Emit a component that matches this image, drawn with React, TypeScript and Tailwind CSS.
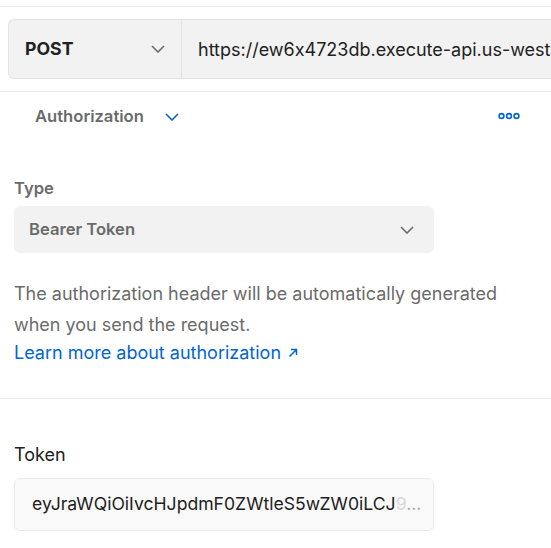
function Chevron({ className, color = "#6b6b6b" }: { className?: string; color?: string }) {
  return (
    <svg className={className} width="14" height="8" viewBox="0 0 14 8" fill="none">
      <polyline points="1,1 7,7 13,1" stroke={color} strokeWidth="1.6" />
    </svg>
  );
}

function Dots() {
  return (
    <svg width="22" height="8" viewBox="0 0 22 8" fill="none">
      <circle cx="3.5" cy="4" r="2.4" stroke="#0265d2" strokeWidth="1.6" />
      <circle cx="11" cy="4" r="2.4" stroke="#0265d2" strokeWidth="1.6" />
      <circle cx="18.5" cy="4" r="2.4" stroke="#0265d2" strokeWidth="1.6" />
    </svg>
  );
}

function ExternalArrow() {
  return (
    <svg width="10" height="10" viewBox="0 0 10 10" fill="none">
      <path d="M1.5 8.5 L8.5 1.5 M3 1.5 H8.5 V7" stroke="#0265d2" strokeWidth="1.5" />
    </svg>
  );
}

export default function App() {
  return (
    <div
      className="w-[551px] h-[548px] overflow-hidden bg-white [font-feature-settings:'calt'_0]"
      style={{ fontFamily: "Inter, 'Noto Sans', sans-serif" }}
    >
      <div className="h-[6px]" />
      <div className="border-t border-b border-[#ebebeb] px-[8px] py-[12px]">
        <div className="flex h-[60px] w-[600px] rounded-l-[6px] border border-r-0 border-[#e3e3e3] bg-[#f2f2f2]">
          <div className="flex w-[173px] shrink-0 items-center justify-between border-r border-[#e3e3e3] pl-[16px] pr-[16px]">
            <span className="text-[17.7px] font-bold text-[#212121]">POST</span>
            <Chevron />
          </div>
          <div className="flex min-w-0 items-center overflow-hidden whitespace-nowrap pl-[16px] text-[18px] text-[#212121]">
            https://ew6x4723db.execute-api.us-west-2.amazonaws.com
          </div>
        </div>
      </div>

      <div className="flex items-center justify-between pl-[35px] pr-[31px] pt-[12px]">
        <div className="flex items-center gap-[21px]">
          <span className="text-[16.6px] font-semibold leading-[24px] text-[#6b6b6b]">Authorization</span>
          <Chevron color="#0265d2" className="mt-[1px]" />
        </div>
        <Dots />
      </div>

      <div className="px-[14px]">
        <div className="mt-[48px] text-[16.6px] font-semibold leading-[24px] text-[#6b6b6b]">Type</div>
        <div className="mt-[6px] flex h-[47px] w-[420px] items-center justify-between rounded-[6px] bg-[#f2f2f2] pl-[15px] pr-[20px]">
          <span className="text-[16.6px] font-semibold text-[#6b6b6b]">Bearer Token</span>
          <Chevron />
        </div>

        <p className="mt-[25px] w-[500px] text-[18px] leading-[31px] text-[#6b6b6b]">
          The authorization header will be automatically generated when you send the request.
        </p>
        <div className="flex items-center gap-[7px] text-[18px] leading-[26px] text-[#0265d2]">
          <span>Learn more about authorization</span>
          <ExternalArrow />
        </div>
      </div>

      <div className="mt-[32px] border-t border-[#ebebeb]" />

      <div className="px-[14px]">
        <div className="mt-[44px] text-[18px] leading-[24px] text-[#212121]">Token</div>
        <div className="mt-[11px] flex h-[53px] w-[420px] items-center rounded-[6px] border border-[#ebebeb] bg-[#f9f9f9] pl-[17px]">
          <span className="whitespace-nowrap text-[17.6px] text-[#212121]">
            eyJraWQiOiIvcHJpdmF0ZWtleS5wZW0iLCJ
            <span className="text-[#d8d8d8]">9</span>
            <span className="text-[#a6a6a6]">...</span>
          </span>
        </div>
      </div>
    </div>
  );
}
